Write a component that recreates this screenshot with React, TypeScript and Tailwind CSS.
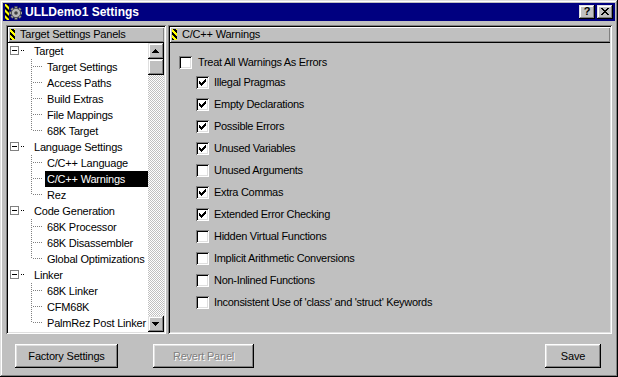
import React from 'react';

const raised =
  "shadow-[inset_-1px_-1px_0_#000,inset_1px_1px_0_#fff,inset_-2px_-2px_0_#808080,inset_2px_2px_0_#dfdfdf]";
const raisedSmall =
  "shadow-[inset_-1px_-1px_0_#000,inset_1px_1px_0_#dfdfdf,inset_-2px_-2px_0_#808080,inset_2px_2px_0_#fff]";
const sunken =
  "shadow-[inset_1px_1px_0_#808080,inset_-1px_-1px_0_#fff,inset_2px_2px_0_#000,inset_-2px_-2px_0_#dfdfdf]";
const windowBevel =
  "shadow-[inset_-1px_-1px_0_#000,inset_1px_1px_0_#dfdfdf,inset_-2px_-2px_0_#808080,inset_2px_2px_0_#fff]";

function Px({ pts, fill = '#000' }: { pts: [number, number][]; fill?: string }) {
  return (
    <>
      {pts.map(([x, y], i) => (
        <rect key={i} x={x} y={y} width={1} height={1} fill={fill} />
      ))}
    </>
  );
}

function Stripe({ w, h }: { w: number; h: number }) {
  const bands: string[] = [];
  for (let y = -6; y < h + 6; y += 6) {
    bands.push(`0,${y} ${w},${y + w} ${w},${y + w + 3} 0,${y + 3}`);
  }
  return (
    <svg width={w} height={h} viewBox={`0 0 ${w} ${h}`} shapeRendering="crispEdges" className="block">
      <rect x={0} y={0} width={w} height={h} fill="#000" />
      {bands.map((p, i) => (
        <polygon key={i} points={p} fill="#ffff00" />
      ))}
    </svg>
  );
}

function TitleIcon() {
  const teeth = [0, 45, 90, 135, 180, 225, 270, 315];
  return (
    <svg width={17} height={16} viewBox="0 0 17 16" className="block">
      <rect x={0} y={0} width={4} height={16} fill="#000" />
      <polygon points="0,-1 4,3 4,6 0,2" fill="#ffff00" />
      <polygon points="0,5 4,9 4,12 0,8" fill="#ffff00" />
      <polygon points="0,11 4,15 4,18 0,14" fill="#ffff00" />
      <g transform="translate(11,9)">
        {teeth.map((a) => (
          <rect key={a} x={-1.3} y={-6.5} width={2.6} height={3} fill="#9a9a9a" stroke="#404040" strokeWidth={0.5} transform={`rotate(${a})`} />
        ))}
        <circle r={4.6} fill="#b8b8b8" stroke="#404040" strokeWidth={0.8} />
        <circle r={1.8} fill="#404040" />
      </g>
    </svg>
  );
}

function Check() {
  const pts: [number, number][] = [
    [6, 0],
    [5, 1], [6, 1],
    [0, 2], [4, 2], [5, 2], [6, 2],
    [0, 3], [1, 3], [3, 3], [4, 3], [5, 3],
    [0, 4], [1, 4], [2, 4], [3, 4], [4, 4],
    [1, 5], [2, 5], [3, 5],
    [2, 6],
  ];
  return (
    <svg width={13} height={13} viewBox="0 0 13 13" shapeRendering="crispEdges" className="block">
      <g transform="translate(3,3)">
        <Px pts={pts} />
      </g>
    </svg>
  );
}

function Checkbox({ checked }: { checked: boolean }) {
  return (
    <div className={`w-[13px] h-[13px] bg-white shrink-0 ${sunken}`}>{checked && <Check />}</div>
  );
}

function Arrow({ down }: { down?: boolean }) {
  const rows = down
    ? [
        [4, 10, 6],
        [5, 9, 7],
        [6, 8, 8],
        [7, 7, 9],
      ]
    : [
        [7, 7, 6],
        [6, 8, 7],
        [5, 9, 8],
        [4, 10, 9],
      ];
  return (
    <svg width={16} height={16} viewBox="0 0 16 16" shapeRendering="crispEdges" className="block">
      {rows.map(([a, b, y], i) => (
        <rect key={i} x={a - 0.5} y={y} width={b - a + 1} height={1} fill="#000" />
      ))}
    </svg>
  );
}

type Node = { t: string; lvl: 0 | 1; last?: boolean; sel?: boolean };

const tree: Node[] = [
  { t: 'Target', lvl: 0 },
  { t: 'Target Settings', lvl: 1 },
  { t: 'Access Paths', lvl: 1 },
  { t: 'Build Extras', lvl: 1 },
  { t: 'File Mappings', lvl: 1 },
  { t: '68K Target', lvl: 1, last: true },
  { t: 'Language Settings', lvl: 0 },
  { t: 'C/C++ Language', lvl: 1 },
  { t: 'C/C++ Warnings', lvl: 1, sel: true },
  { t: 'Rez', lvl: 1, last: true },
  { t: 'Code Generation', lvl: 0 },
  { t: '68K Processor', lvl: 1 },
  { t: '68K Disassembler', lvl: 1 },
  { t: 'Global Optimizations', lvl: 1, last: true },
  { t: 'Linker', lvl: 0 },
  { t: '68K Linker', lvl: 1 },
  { t: 'CFM68K', lvl: 1 },
  { t: 'PalmRez Post Linker', lvl: 1, last: true },
];

function ParentGlyph() {
  return (
    <svg width={24} height={16} viewBox="0 0 24 16" shapeRendering="crispEdges" className="block shrink-0">
      <rect x={2.5} y={3.5} width={8} height={8} fill="#fff" stroke="#808080" strokeWidth={1} />
      <rect x={4} y={7} width={5} height={1} fill="#000" />
      <Px pts={[[13, 7], [15, 7]]} fill="#000" />
    </svg>
  );
}

function ChildGlyph({ last }: { last?: boolean }) {
  const pts: [number, number][] = [];
  const end = last ? 7 : 15;
  for (let y = 0; y <= end; y += 2) pts.push([23, y]);
  for (let x = 25; x <= 33; x += 2) pts.push([x, 7]);
  return (
    <svg width={37} height={16} viewBox="0 0 37 16" shapeRendering="crispEdges" className="block shrink-0">
      <Px pts={pts} fill="#808080" />
    </svg>
  );
}

function TreeRow({ n }: { n: Node }) {
  return (
    <div className="flex h-[16px] items-center">
      {n.lvl === 0 ? <ParentGlyph /> : <ChildGlyph last={n.last} />}
      <div
        className={`h-[16px] leading-[16px] whitespace-nowrap pl-[2px] ${
          n.sel ? 'bg-black text-white flex-1' : 'text-black pr-[2px]'
        }`}
      >
        {n.t}
      </div>
    </div>
  );
}

const warnings: { t: string; c: boolean }[] = [
  { t: 'Illegal Pragmas', c: true },
  { t: 'Empty Declarations', c: true },
  { t: 'Possible Errors', c: true },
  { t: 'Unused Variables', c: true },
  { t: 'Unused Arguments', c: false },
  { t: 'Extra Commas', c: true },
  { t: 'Extended Error Checking', c: true },
  { t: 'Hidden Virtual Functions', c: false },
  { t: 'Implicit Arithmetic Conversions', c: false },
  { t: 'Non-Inlined Functions', c: false },
  { t: "Inconsistent Use of 'class' and 'struct' Keywords", c: false },
];

function PanelHeader({ title }: { title: string }) {
  return (
    <div className="h-[16px] border-b border-black bg-[#c0c0c0] shadow-[inset_1px_1px_0_#fff,inset_-1px_-1px_0_#808080] flex items-center pl-[2px]">
      <Stripe w={5} h={11} />
      <span className="ml-[5px] leading-[15px] text-black">{title}</span>
    </div>
  );
}

export default function App() {
  return (
    <div className="w-[618px] h-[377px] overflow-hidden bg-[#c0c0c0]">
      <div
        className={`w-[618px] h-[377px] p-[3px] flex flex-col bg-[#c0c0c0] text-[11px] tracking-[-0.2px] font-['Liberation_Sans',Arial,sans-serif] ${windowBevel}`}
      >
        {/* Title bar */}
        <div className="h-[18px] bg-[#000080] flex items-center pl-[2px] pr-[2px] shrink-0">
          <TitleIcon />
          <span className="ml-[3px] text-white font-bold text-[12px] tracking-[0px] leading-[18px]">ULLDemo1 Settings</span>
          <div className="ml-auto flex items-center">
            <div className={`w-[16px] h-[14px] bg-[#c0c0c0] flex items-center justify-center ${raisedSmall}`}>
              <span className="font-bold text-[11px] leading-[11px] text-black font-['Liberation_Sans',Arial,sans-serif] -mt-[1px]">?</span>
            </div>
            <div className={`ml-[2px] w-[16px] h-[14px] bg-[#c0c0c0] flex items-center justify-center ${raisedSmall}`}>
              <svg width={8} height={7} viewBox="0 0 8 7" shapeRendering="crispEdges" className="block -mt-[1px]">
                <Px
                  pts={[
                    [0, 0], [1, 0], [6, 0], [7, 0],
                    [1, 1], [2, 1], [5, 1], [6, 1],
                    [2, 2], [3, 2], [4, 2], [5, 2],
                    [3, 3], [4, 3],
                    [2, 4], [3, 4], [4, 4], [5, 4],
                    [1, 5], [2, 5], [5, 5], [6, 5],
                    [0, 6], [1, 6], [6, 6], [7, 6],
                  ]}
                />
              </svg>
            </div>
          </div>
        </div>

        {/* Panels */}
        <div className="flex mt-[4px] ml-[3px] h-[309px] shrink-0">
          {/* Left panel */}
          <div className={`w-[160px] p-[2px] flex flex-col ${sunken}`}>
            <PanelHeader title="Target Settings Panels" />
            <div className="flex flex-1 bg-white overflow-hidden">
              <div className="w-[140px] flex flex-col overflow-hidden">
                {tree.map((n, i) => (
                  <TreeRow key={i} n={n} />
                ))}
              </div>
              <div className="w-[16px] flex flex-col">
                <div className={`h-[16px] bg-[#c0c0c0] ${raisedSmall}`}>
                  <Arrow />
                </div>
                <div className={`h-[16px] bg-[#c0c0c0] ${raisedSmall}`} />
                <div className="flex-1 bg-[image:repeating-conic-gradient(#c0c0c0_0_25%,#ffffff_0_50%)] bg-[length:2px_2px]" />
                <div className={`h-[16px] bg-[#c0c0c0] ${raisedSmall}`}>
                  <Arrow down />
                </div>
              </div>
            </div>
          </div>

          {/* Right panel */}
          <div className={`ml-[2px] w-[444px] p-[2px] flex flex-col ${sunken}`}>
            <PanelHeader title="C/C++ Warnings" />
            <div className="flex-1 bg-[#c0c0c0] pt-[10px] pl-[9px] text-black">
              <div className="h-[18px] flex items-center gap-[6px]">
                <Checkbox checked={false} />
                <span className="tracking-[-0.3px] whitespace-nowrap">Treat All Warnings As Errors</span>
              </div>
              <div className="pl-[17px] flex flex-col">
                {warnings.map((w) => (
                  <div key={w.t} className="h-[22px] flex items-center gap-[5px]">
                    <Checkbox checked={w.c} />
                    <span className="tracking-[-0.3px] whitespace-nowrap">{w.t}</span>
                  </div>
                ))}
              </div>
            </div>
          </div>
        </div>

        {/* Buttons */}
        <div className="flex mt-[10px] h-[24px] shrink-0">
          <div className={`ml-[12px] w-[103px] h-[24px] bg-[#c0c0c0] flex items-center justify-center text-black ${raised}`}>
            Factory Settings
          </div>
          <div
            className={`ml-[35px] w-[101px] h-[24px] bg-[#c0c0c0] flex items-center justify-center text-[#808080] [text-shadow:1px_1px_0_#fff] ${raised}`}
          >
            Revert Panel
          </div>
          <div className={`ml-auto mr-[14px] w-[56px] h-[24px] bg-[#c0c0c0] flex items-center justify-center text-black ${raised}`}>
            Save
          </div>
        </div>
      </div>
    </div>
  );
}
